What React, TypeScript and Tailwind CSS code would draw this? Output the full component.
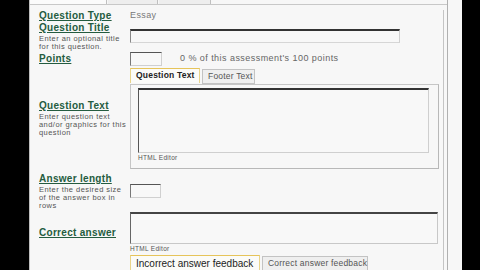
import React from 'react';

const font = { fontFamily: '"Liberation Sans", Arial, sans-serif' };

const Label: React.FC<{ title: string; desc?: string[] }> = ({ title, desc }) => (
  <div className="w-[91px] shrink-0">
    <div className="text-[10px] leading-[12px] font-bold text-[#245c40] underline tracking-[0.3px]">{title}</div>
    {desc && (
      <div className="text-[7.5px] leading-[8px] text-[#555] tracking-[0.45px] mt-[1px] whitespace-nowrap">
        {desc.map((d) => (
          <div key={d}>{d}</div>
        ))}
      </div>
    )}
  </div>
);

const SmallInput: React.FC<{ w: string }> = ({ w }) => (
  <div className={`${w} h-[14px] bg-[#f8f8f8] border-t border-l border-t-[#555] border-l-[#777] border-r border-b border-r-[#d0d0d0] border-b-[#d0d0d0]`} />
);

const Tab: React.FC<{ label: string; active?: boolean; w: string; big?: boolean }> = ({ label, active, w, big }) => (
  <div
    className={`${w} h-[15px] flex items-center px-[5px] border ${
      active
        ? 'bg-[#fbfbf8] border-[#e9d48a] border-t-[#e6c45a] border-b-0 text-[#222]'
        : 'bg-[#efefef] border-[#c3c3c3] text-[#555] mt-[1px]'
    } ${big ? 'text-[10px] tracking-normal' : 'text-[8.5px] tracking-[0.2px]'} ${active && !big ? 'font-bold' : ''} whitespace-nowrap`}
  >
    {label}
  </div>
);

export default function App() {
  return (
    <div className="w-[480px] h-[270px] overflow-hidden bg-black flex" style={font}>
      <div className="w-[29px] shrink-0" />
      <div className="w-[433px] shrink-0 bg-[#f7f7f7] border-l border-[#bdbdbd] flex">
        <div className="w-[418px] shrink-0 border-r border-[#b0b0b0]">
          {/* top tabs strip */}
          <div className="h-[5px] flex border-b border-[#c8c8c8]">
            <div className="w-[77px] h-[4px] bg-[#fbfbfb] border-r border-[#c0c0c0]" />
            <div className="w-[50px] h-[4px] bg-[#eeeeee] border-r border-[#c0c0c0] ml-[1px]" />
            <div className="w-[52px] h-[4px] bg-[#eeeeee] border-r border-[#c0c0c0] ml-[1px]" />
          </div>
          <div className="w-[414px] h-[265px] border-r border-[#c4c4c4] pl-[9px]">
            {/* Question Type */}
            <div className="flex mt-[5px] h-[12px] items-center">
              <Label title="Question Type" />
              <div className="text-[9px] text-[#777] tracking-[0.4px]">Essay</div>
            </div>
            {/* Question Title */}
            <div className="flex h-[30px]">
              <Label title="Question Title" desc={['Enter an optional title', 'for this question.']} />
              <div className="mt-[7px] w-[270px] h-[14px] bg-[#f8f8f8] border-t-2 border-t-[#333] border-l border-l-[#888] border-r border-r-[#d0d0d0] border-b border-b-[#d6d6d6]" />
            </div>
            {/* Points */}
            <div className="flex items-center h-[14px]">
              <Label title="Points" />
              <SmallInput w="w-[32px]" />
              <div className="ml-[18px] text-[9px] text-[#666] tracking-[0.45px]">0 % of this assessment's 100 points</div>
            </div>
            {/* Question Text */}
            <div className="flex items-center mt-[2px] h-[100px]">
              <Label title="Question Text" desc={['Enter question text', 'and/or graphics for this', 'question']} />
              <div>
                <div className="flex gap-[2px]">
                  <Tab label="Question Text" active w="w-[70px]" />
                  <Tab label="Footer Text" w="w-[53px]" />
                </div>
                <div className="w-[309px] h-[85px] border border-[#c6c6c6] border-r-[#b8b8b8] border-b-[#b8b8b8] pl-[7px] pt-[3px]">
                  <div className="w-[291px] h-[65px] bg-[#f8f8f8] border-t-2 border-t-[#333] border-l border-l-[#555] border-r border-r-[#cfcfcf] border-b border-b-[#cfcfcf]" />
                  <div className="text-[6.5px] leading-[10px] text-[#555] tracking-[0.3px]">HTML Editor</div>
                </div>
              </div>
            </div>
            {/* Answer length */}
            <div className="flex mt-[5px] h-[38px]">
              <Label title="Answer length" desc={['Enter the desired size', 'of the answer box in', 'rows']} />
              <div className="mt-[11px]">
                <SmallInput w="w-[31px]" />
              </div>
            </div>
            {/* Correct answer */}
            <div className="flex items-center mt-[1px] h-[42px]">
              <Label title="Correct answer" />
              <div>
                <div className="w-[308px] h-[32px] bg-[#f8f8f8] border-t-2 border-t-[#444] border-l border-l-[#666] border-r border-r-[#c8c8c8] border-b border-b-[#c8c8c8]" />
                <div className="text-[6.5px] leading-[10px] text-[#555] tracking-[0.3px]">HTML Editor</div>
              </div>
            </div>
            {/* Feedback tabs */}
            <div className="flex mt-[1px]">
              <div className="w-[91px] shrink-0" />
              <div className="flex gap-[2px]">
                <Tab label="Incorrect answer feedback" active big w="w-[130px]" />
                <Tab label="Correct answer feedback" w="w-[106px]" />
              </div>
            </div>
          </div>
        </div>
      </div>
    </div>
  );
}
